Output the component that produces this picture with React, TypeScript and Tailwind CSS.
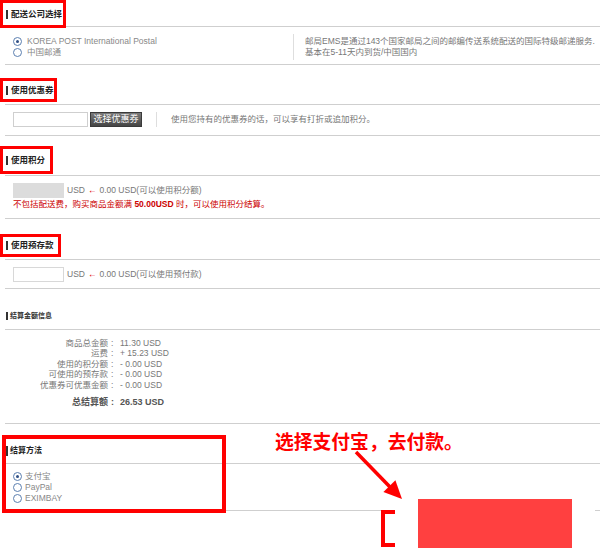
import React from "react";

const Line = () => <div className="ml-[5px] h-px bg-[#cfcfcf]" />;

const Radio = ({ checked }: { checked?: boolean }) => (
  <span className="w-[9px] h-[9px] rounded-full border border-[#5b7fb0] bg-white flex items-center justify-center shrink-0">
    {checked && <span className="w-[3px] h-[3px] rounded-full bg-[#2f4f85]" />}
  </span>
);

// header wrapped in red highlight (outline keeps layout untouched)
const BoxTitle = ({ text, w, h, pt, pb }: { text: string; w: string; h: string; pt: string; pb: string }) => (
  <div className={`pl-[3px] ${pt} ${pb}`}>
    <div className={`${w} ${h} outline-3 outline-solid outline-[#ff0000] flex items-center gap-[3px] pl-[3px]`}>
      <span className="w-[2px] h-[9px] bg-[#333]" />
      <span className="font-bold text-[#222] text-[8.5px]">{text}</span>
    </div>
  </div>
);

const SUMMARY = [
  ["商品总金额", "11.30 USD"],
  ["运费", "+ 15.23 USD"],
  ["使用的积分额", "- 0.00 USD"],
  ["可使用的预存款", "- 0.00 USD"],
  ["优惠券可优惠金额", "- 0.00 USD"],
];

export default function App() {
  return (
    <div className="relative w-[600px] h-[554px] overflow-hidden bg-white text-[8.5px] text-[#777] font-['Liberation_Sans','Noto_Sans_CJK_SC',sans-serif]">
      {/* 配送公司选择 */}
      <BoxTitle text="配送公司选择" w="w-[60px]" h="h-[22px]" pt="pt-[3px]" pb="pb-[1px]" />
      <Line />
      <div className="flex pt-[9px] pb-[6px]">
        <div className="w-[293px] pl-[13px] flex flex-col text-[#888]">
          <div className="h-[11px] flex items-center gap-[5px]">
            <Radio checked />
            <span>KOREA POST International Postal</span>
          </div>
          <div className="h-[11px] flex items-center gap-[5px]">
            <Radio />
            <span>中国邮通</span>
          </div>
        </div>
        <div className="w-px bg-[#dedede] -mt-[2px] -mb-[2px]" />
        <div className="pl-[11px] leading-[11px] whitespace-nowrap text-[#777]">
          <div>邮局EMS是通过143个国家邮局之间的邮编传送系统配送的国际特级邮递服务.</div>
          <div>基本在5-11天内到货/中国国内</div>
        </div>
      </div>
      <Line />

      {/* 使用优惠券 */}
      <BoxTitle text="使用优惠券" w="w-[51px]" h="h-[18px]" pt="pt-[16px]" pb="pb-[5px]" />
      <Line />
      <div className="flex items-center pl-[13px] pt-[7px] pb-[8px]">
        <div className="w-[75px] h-[15px] border border-[#cfcfcf] bg-white" />
        <div className="ml-[2px] w-[52px] h-[15px] bg-gradient-to-b from-[#7a7a7a] to-[#454545] border border-[#3a3a3a] text-white text-[9px] flex items-center justify-center">
          选择优惠券
        </div>
        <div className="ml-[14px] w-px h-[15px] bg-[#dedede]" />
        <span className="ml-[14px]">使用您持有的优惠券的话，可以享有打折或追加积分。</span>
      </div>
      <Line />

      {/* 使用积分 */}
      <BoxTitle text="使用积分" w="w-[47px]" h="h-[22px]" pt="pt-[13px]" pb="pb-[4px]" />
      <Line />
      <div className="pl-[13px] pt-[7px] pb-[7px]">
        <div className="h-[15px] flex items-center">
          <div className="w-[51px] h-[15px] bg-[#dcdcdc]" />
          <span className="ml-[3px]">USD</span>
          <span className="mx-[3px] text-[#e00000]">←</span>
          <span>0.00 USD(可以使用积分额)</span>
        </div>
        <div className="h-[13px] flex items-center text-[#cc0000] whitespace-pre">
          <span>不包括配送费，购买商品金额满 </span>
          <span className="font-bold">50.00USD</span>
          <span> 时，可以使用积分结算。</span>
        </div>
      </div>
      <Line />

      {/* 使用预存款 */}
      <BoxTitle text="使用预存款" w="w-[55px]" h="h-[17px]" pt="pt-[18px]" pb="pb-[5px]" />
      <Line />
      <div className="flex items-center pl-[13px] pt-[7px] pb-[6px]">
        <div className="w-[51px] h-[15px] border border-[#d8d8d8] bg-white" />
        <span className="ml-[3px]">USD</span>
        <span className="mx-[3px] text-[#e00000]">←</span>
        <span>0.00 USD(可以使用预付款)</span>
      </div>
      <Line />

      {/* 结算金额信息 */}
      <div className="pl-[6px] pt-[21px] pb-[7px] h-[40px] flex items-end">
        <div className="h-[12px] flex items-center gap-[2px]">
          <span className="w-[2px] h-[8px] bg-[#333]" />
          <span className="font-bold text-[#333] text-[7px]">结算金额信息</span>
        </div>
      </div>
      <Line />
      <div className="pt-[8px] pb-[14px]">
        {SUMMARY.map(([label, value]) => (
          <div key={label} className="flex h-[10.5px] items-center">
            <span className="w-[108px] text-right">{label}</span>
            <span className="w-[12px] pl-[3px]">:</span>
            <span>{value}</span>
          </div>
        ))}
        <div className="flex h-[12px] items-center mt-[6px] font-bold text-[#555] text-[9px]">
          <span className="w-[108px] text-right">总结算额</span>
          <span className="w-[12px] pl-[3px]">:</span>
          <span>26.53 USD</span>
        </div>
      </div>
      <Line />

      {/* 结算方法 */}
      <div className="pl-[5px] pt-[21px] pb-[6px]">
        <div className="h-[12px] flex items-center gap-[2px]">
          <span className="w-[3px] h-[10px] bg-[#333]" />
          <span className="font-bold text-[#222] text-[8px]">结算方法</span>
        </div>
      </div>
      <Line />
      <div className="pl-[13px] pt-[7px] pb-[6px] text-[#888]">
        {[
          ["支付宝", true],
          ["PayPal", false],
          ["EXIMBAY", false],
        ].map(([label, on]) => (
          <div key={label as string} className="h-[11px] flex items-center gap-[3px]">
            <Radio checked={on as boolean} />
            <span>{label as string}</span>
          </div>
        ))}
      </div>
      <Line />

      {/* annotations over the screenshot */}
      <div className="absolute left-[2px] top-[435px] w-[224px] h-[78px] border-4 border-[#ff0000]" />
      <div className="absolute left-[381px] top-[510px] w-[16px] h-[37px] border-l-4 border-t-4 border-b-4 border-[#ff0000]" />
      <div className="absolute left-[395px] top-[490px] w-[200px] h-[64px] bg-white" />
      <div className="absolute left-[418px] top-[499px] w-[154px] h-[49px] bg-[#ff4040]" />
      <div className="absolute left-[275px] top-[431px] text-[18.8px] leading-[19px] font-bold text-[#ff0000] whitespace-nowrap font-['Noto_Sans_CJK_SC',sans-serif]">
        选择支付宝，去付款。
      </div>
      <svg className="absolute left-[350px] top-[445px]" width="60" height="60" viewBox="0 0 60 60">
        <line x1="6" y1="7" x2="40" y2="42" stroke="#ff0000" strokeWidth="3.5" />
        <polygon points="52,54 33.4,47 45.4,35.2" fill="#ff0000" />
      </svg>
    </div>
  );
}
